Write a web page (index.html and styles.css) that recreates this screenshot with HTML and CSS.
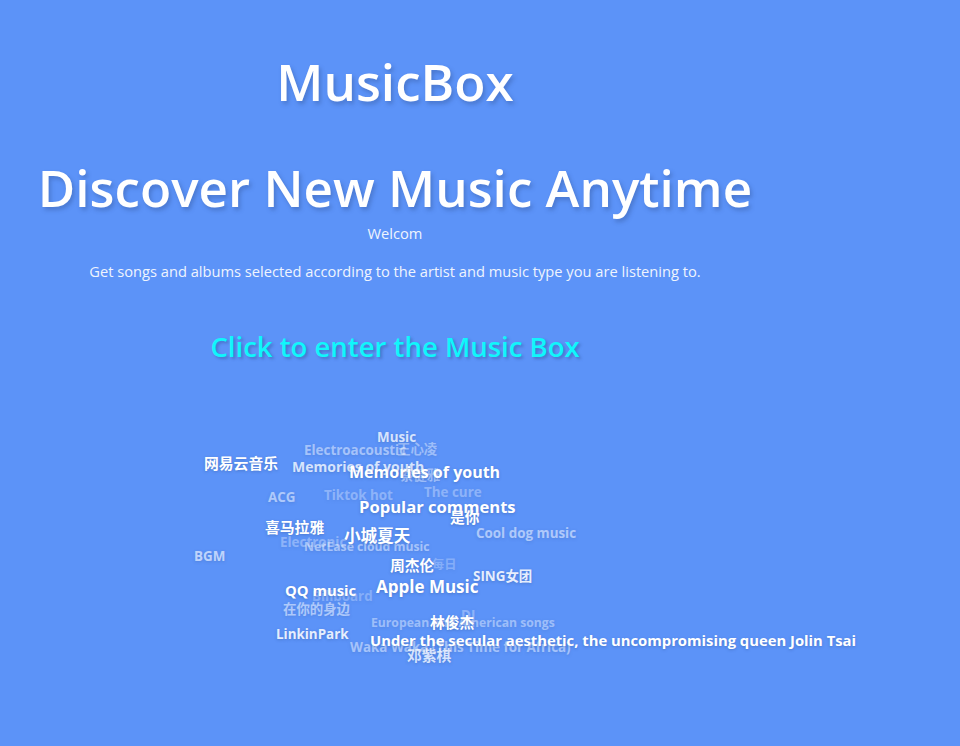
FILE: index.html
```html
<!DOCTYPE html>
<html lang="en">
<head>
    <meta charset="UTF-8">
    <meta name="viewport" content="width=device-width, initial-scale=1.0">
    <title>MusicBox</title>
    <link rel="stylesheet" href="styles.css">
</head>
<body>
    <main class="intro">
        <h1 class="brand">MusicBox</h1>
        <h2 class="headline">Discover New Music Anytime</h2>
        <p class="welcome">Welcom</p>
        <p class="lead">Get songs and albums selected according to the artist and music type you are listening to.</p>
        <a class="enter" href="#">Click to enter the Music Box</a>
    </main>

    <div class="cloud">
        <span class="tag s13 o30" style="left:100px;top:105px">Electronic</span>
        <span class="tag s13 o25" style="left:132px;top:159px">Billboard</span>
        <span class="tag s12 o25" style="left:252px;top:128px">每日</span>
        <span class="tag s13 o30" style="left:144px;top:58px">Tiktok hot</span>
        <span class="tag s13 o30" style="left:244px;top:55px">The cure</span>
        <span class="tag s13 o30" style="left:281px;top:178px">DJ</span>
        <span class="tag s13 o40" style="left:217px;top:12px">王心凌</span>
        <span class="tag s13 o45" style="left:124px;top:13px">Electroacoustic</span>
        <span class="tag s13 o40" style="left:220px;top:38px">蔡健雅</span>
        <span class="tag s13 o50" style="left:88px;top:60px">ACG</span>
        <span class="tag s13 o50" style="left:296px;top:96px">Cool dog music</span>
        <span class="tag s12 o45" style="left:124px;top:110px">NetEase cloud music</span>
        <span class="tag s13 o60" style="left:14px;top:119px">BGM</span>
        <span class="tag s13 o50" style="left:103px;top:172px">在你的身边</span>
        <span class="tag s12 o40" style="left:191px;top:186px">European and American songs</span>
        <span class="tag s13 o45" style="left:170px;top:210px">Waka Waka (This Time for Africa)</span>
        <span class="tag s13 o75" style="left:197px;top:0">Music</span>
        <span class="tag s14 o75" style="left:112px;top:30px">Memories of youth</span>
        <span class="tag s15 o75" style="left:227px;top:218px">邓紫棋</span>
        <span class="tag s13 o85" style="left:96px;top:197px">LinkinPark</span>
        <span class="tag s13 o85" style="left:293px;top:139px">SING女团</span>
        <span class="tag s15" style="left:24px;top:26px">网易云音乐</span>
        <span class="tag s16" style="left:169px;top:35px">Memories of youth</span>
        <span class="tag s17" style="left:179px;top:70px">Popular comments</span>
        <span class="tag s15" style="left:270px;top:80px">是你</span>
        <span class="tag s15" style="left:85px;top:90px">喜马拉雅</span>
        <span class="tag s17" style="left:164px;top:99px">小城夏天</span>
        <span class="tag s15" style="left:210px;top:128px">周杰伦</span>
        <span class="tag s18" style="left:196px;top:150px">Apple Music</span>
        <span class="tag s15" style="left:105px;top:153px">QQ music</span>
        <span class="tag s15" style="left:250px;top:185px">林俊杰</span>
        <span class="tag s15" style="left:190px;top:203px">Under the secular aesthetic, the uncompromising queen Jolin Tsai</span>
    </div>
</body>
</html>
```

FILE: styles.css
```css
body {
    margin: 0;
    height: 746px;
    overflow: hidden;
    position: relative;
    background-color: #5c93f8;
    color: #fff;
    font-family: "Open Sans", "Noto Sans CJK SC", sans-serif;
}
.intro {
    width: 790px;
    text-align: center;
}
.brand {
    margin: 0;
    padding-top: 48px;
    font-size: 51.2px;
    line-height: 66px;
    font-weight: 600;
    text-shadow: 2px 3px 4px rgba(40, 70, 130, 0.35);
}
.headline {
    margin: 39px 0 0;
    font-size: 51.2px;
    line-height: 68px;
    font-weight: 600;
    text-shadow: 2px 3px 4px rgba(40, 70, 130, 0.35);
}
.welcome {
    margin: 0;
    font-size: 14.67px;
    line-height: 24px;
    opacity: 0.9;
}
.lead {
    margin: 14px 0 0;
    font-size: 14.67px;
    line-height: 24px;
    opacity: 0.9;
}
.enter {
    display: block;
    margin-top: 46px;
    color: #10f6fc;
    font-size: 27.5px;
    line-height: 36px;
    font-weight: 600;
    text-decoration: none;
    text-shadow: 2px 2px 3px rgba(40, 70, 130, 0.4);
}
.cloud {
    position: absolute;
    left: 180px;
    top: 428px;
    width: 700px;
    height: 240px;
}
.tag {
    position: absolute;
    white-space: nowrap;
    font-weight: 700;
    line-height: 18px;
    text-shadow: 0 1px 3px rgba(40, 70, 130, 0.35);
}
.s12 { font-size: 12.2px; }
.s13 { font-size: 13.4px; }
.s14 { font-size: 14px; }
.s15 { font-size: 14.8px; }
.s16 { font-size: 16px; }
.s17 { font-size: 16.6px; }
.s18 { font-size: 17px; }
.o25 { opacity: 0.25; }
.o30 { opacity: 0.3; }
.o40 { opacity: 0.4; }
.o45 { opacity: 0.45; }
.o50 { opacity: 0.5; }
.o60 { opacity: 0.6; }
.o75 { opacity: 0.75; }
.o85 { opacity: 0.85; }
```
